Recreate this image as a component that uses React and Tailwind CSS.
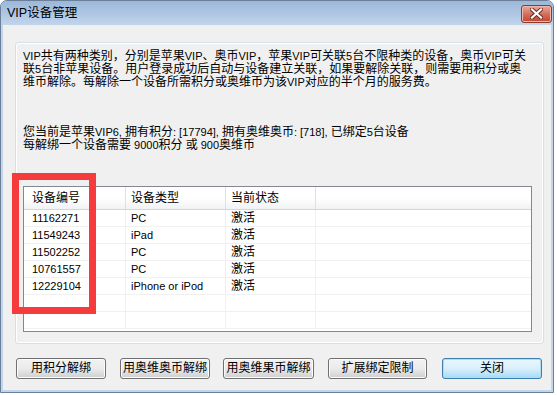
import React from 'react';

const font = { fontFamily: '"Liberation Sans", "Noto Sans CJK SC", sans-serif' };

const devices = [
  { id: '11162271', type: 'PC', state: '激活' },
  { id: '11549243', type: 'iPad', state: '激活' },
  { id: '11502252', type: 'PC', state: '激活' },
  { id: '10761557', type: 'PC', state: '激活' },
  { id: '12229104', type: 'iPhone or iPod', state: '激活' },
  null,
  null,
];

const CJK = /[\u3000-\u9fff\uff00-\uffef]/;

// Chinese runs at 12px, Latin/digits a touch smaller like the Tahoma UI font
function Line({ text }) {
  const runs = text.match(/[\u3000-\u9fff\uff00-\uffef]+|[^\u3000-\u9fff\uff00-\uffef]+/g);
  return (
    <div className="h-[13px] whitespace-nowrap text-[12px] leading-[13px] text-black">
      {runs.map((r, i) =>
        CJK.test(r) ? (
          <span key={i}>{r}</span>
        ) : (
          <span key={i} className="text-[11px]">
            {r}
          </span>
        )
      )}
    </div>
  );
}

function Row({ item }) {
  return (
    <div className="flex h-[17px] border-b border-[#f0f0f0] text-[11px] leading-[16px] text-black">
      <div className="w-[102px] border-r border-[#f0f0f0] pl-[8px]">{item?.id}</div>
      <div className="w-[100px] border-r border-[#f0f0f0] pl-[5px]">{item?.type}</div>
      <div className="w-[90px] border-r border-[#f0f0f0] pl-[5px] text-[12px]">{item?.state}</div>
      <div className="flex-1" />
    </div>
  );
}

function Btn({ children, primary, w }) {
  return (
    <button
      type="button"
      className={`h-[21px] ${w} rounded-[3px] border text-[12px] leading-[19px] text-black ${
        primary
          ? 'border-[#3c7fb1] bg-gradient-to-b from-[#eaf6fd] via-[#d9f0fc] to-[#a7d9f5] shadow-[inset_0_0_0_1px_#a9def7]'
          : 'border-[#707070] bg-gradient-to-b from-[#f2f2f2] via-[#ebebeb] to-[#cfcfcf] shadow-[inset_0_0_0_1px_#fcfcfc]'
      }`}
    >
      {children}
    </button>
  );
}

export default function App() {
  return (
    <div className="relative h-[395px] w-[557px] bg-white" style={font}>
      <div className="flex h-[393px] w-[554px] flex-col overflow-hidden rounded-t-[7px] border border-[#6b7f99] bg-[#c3d5ea]">
        <div className="flex h-[24px] items-center justify-between bg-gradient-to-b from-[#9cb7d9] to-[#c1d5eb] pl-[6px] pr-[1px]">
          <span className="text-[12.5px] text-black">VIP设备管理</span>
          <div className="mt-[1px] flex h-[18px] w-[31px] items-center justify-center rounded-[3px] border border-[#8b3a2e] bg-gradient-to-b from-[#e9a99c] via-[#d4705e] to-[#c2432d] shadow-[inset_0_0_0_1px_#f0b8aa]">
            <svg width="13" height="11" viewBox="0 0 13 11">
              <path d="M2 1.5 L11 9.5 M11 1.5 L2 9.5" stroke="#6b2a20" strokeWidth="4" strokeLinecap="square" />
              <path d="M2 1.5 L11 9.5 M11 1.5 L2 9.5" stroke="#ffffff" strokeWidth="2.2" strokeLinecap="square" />
            </svg>
          </div>
        </div>

        <div className="mx-[2px] mb-[2px] flex flex-1 flex-col bg-[#f0f0f0]">
          <div className="ml-[12px] mt-[17px] h-[302px] w-[529px] rounded-[3px] border border-[#d5dfe5] shadow-[inset_0_0_0_1px_#ffffff]">
            <div className="pl-[7px] pt-[7px]">
              <Line text="VIP共有两种类别，分别是苹果VIP、奥币VIP，苹果VIP可关联5台不限种类的设备，奥币VIP可关" />
              <Line text="联5台非苹果设备。用户登录成功后自动与设备建立关联，如果要解除关联，则需要用积分或奥" />
              <Line text="维币解除。每解除一个设备所需积分或奥维币为该VIP对应的半个月的服务费。" />
            </div>
            <div className="mt-[37px] pl-[7px]">
              <Line text="您当前是苹果VIP6, 拥有积分: [17794], 拥有奥维奥币: [718], 已绑定5台设备" />
              <Line text="每解绑一个设备需要 9000积分 或 900奥维币" />
            </div>

            <div className="ml-[7px] mt-[34px] h-[146px] w-[509px] overflow-hidden border border-[#828790] bg-white">
              <div className="flex h-[23px] border-b border-[#d5d5d5] bg-gradient-to-b from-white from-50% to-[#f1f2f4] text-[12px] leading-[22px] text-black">
                <div className="w-[102px] border-r border-[#dde0e4] pl-[8px]">设备编号</div>
                <div className="w-[100px] border-r border-[#dde0e4] pl-[5px]">设备类型</div>
                <div className="w-[90px] border-r border-[#dde0e4] pl-[5px]">当前状态</div>
                <div className="flex-1" />
              </div>
              {devices.map((d, i) => (
                <Row key={i} item={d} />
              ))}
            </div>
          </div>

          <div className="ml-[13px] mt-[14px] flex items-center">
            <Btn w="w-[90px]">用积分解绑</Btn>
            <div className="w-[14px]" />
            <Btn w="w-[90px]">用奥维奥币解绑</Btn>
            <div className="w-[13px]" />
            <Btn w="w-[91px]">用奥维果币解绑</Btn>
            <div className="w-[14px]" />
            <Btn w="w-[99px]">扩展绑定限制</Btn>
            <div className="w-[15px]" />
            <Btn w="w-[100px]" primary>
              关闭
            </Btn>
          </div>
        </div>
      </div>

      <div className="absolute left-[12px] top-[173px] h-[141px] w-[84px] border-[7px] border-[#f53b3b]" />
    </div>
  );
}
